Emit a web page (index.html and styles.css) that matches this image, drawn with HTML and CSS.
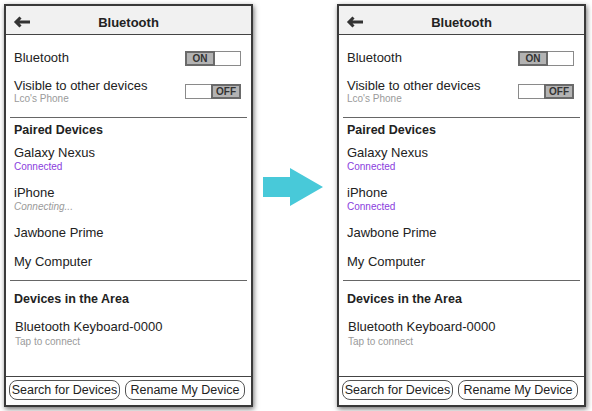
FILE: index.html
```html
<!DOCTYPE html>
<html lang="en">
<head>
  <meta charset="UTF-8">
  <title>Bluetooth Settings</title>
  <link rel="stylesheet" href="styles.css">
</head>
<body>

  <div class="stage">

    <!-- before -->
    <div class="phone">
      <div class="header">
        <svg class="back" width="18" height="12" viewBox="0 0 18 12">
          <path d="M17 6H3M7.5 1.5L3 6l4.5 4.5" fill="none" stroke="#333" stroke-width="3"/>
        </svg>
        <span class="title">Bluetooth</span>
      </div>

      <div class="content">
        <div class="setting first">
          <div class="label">Bluetooth</div>
          <div class="toggle on"><span class="knob">ON</span><span class="blank"></span></div>
        </div>
        <div class="setting second">
          <div>
            <div class="label">Visible to other devices</div>
            <div class="sub">Lco's Phone</div>
          </div>
          <div class="toggle off"><span class="blank"></span><span class="knob">OFF</span></div>
        </div>

        <hr class="divider top">

        <div class="section">Paired Devices</div>
        <div class="device first">
          <div class="name">Galaxy Nexus</div>
          <div class="status connected">Connected</div>
        </div>
        <div class="device second">
          <div class="name">iPhone</div>
          <div class="status connecting">Connecting...</div>
        </div>
        <div class="device third">
          <div class="name">Jawbone Prime</div>
        </div>
        <div class="device last">
          <div class="name">My Computer</div>
        </div>

        <hr class="divider">

        <div class="section area">Devices in the Area</div>
        <div class="device nearby">
          <div class="name">Bluetooth Keyboard-0000</div>
          <div class="status">Tap to connect</div>
        </div>
      </div>

      <div class="footer">
        <button class="btn search">Search for Devices</button>
        <button class="btn rename">Rename My Device</button>
      </div>
    </div>

    <div class="arrow">
      <svg width="60" height="38" viewBox="0 0 60 38">
        <polygon points="0,9 27,9 27,0 60,19 27,38 27,29 0,29" fill="#48c9d9"/>
      </svg>
    </div>

    <!-- after -->
    <div class="phone">
      <div class="header">
        <svg class="back" width="18" height="12" viewBox="0 0 18 12">
          <path d="M17 6H3M7.5 1.5L3 6l4.5 4.5" fill="none" stroke="#333" stroke-width="3"/>
        </svg>
        <span class="title">Bluetooth</span>
      </div>

      <div class="content">
        <div class="setting first">
          <div class="label">Bluetooth</div>
          <div class="toggle on"><span class="knob">ON</span><span class="blank"></span></div>
        </div>
        <div class="setting second">
          <div>
            <div class="label">Visible to other devices</div>
            <div class="sub">Lco's Phone</div>
          </div>
          <div class="toggle off"><span class="blank"></span><span class="knob">OFF</span></div>
        </div>

        <hr class="divider top">

        <div class="section">Paired Devices</div>
        <div class="device first">
          <div class="name">Galaxy Nexus</div>
          <div class="status connected">Connected</div>
        </div>
        <div class="device second">
          <div class="name">iPhone</div>
          <div class="status connected">Connected</div>
        </div>
        <div class="device third">
          <div class="name">Jawbone Prime</div>
        </div>
        <div class="device last">
          <div class="name">My Computer</div>
        </div>

        <hr class="divider">

        <div class="section area">Devices in the Area</div>
        <div class="device nearby">
          <div class="name">Bluetooth Keyboard-0000</div>
          <div class="status">Tap to connect</div>
        </div>
      </div>

      <div class="footer">
        <button class="btn search">Search for Devices</button>
        <button class="btn rename">Rename My Device</button>
      </div>
    </div>

  </div>

</body>
</html>
```

FILE: styles.css
```css
body {
  margin: 0;
  padding: 4px;
  background: white;
  font-family: "Liberation Sans", Arial, sans-serif;
  color: #222;
}

.stage {
  display: flex;
}

.phone {
  width: 249px;
  height: 403px;
  box-sizing: border-box;
  border: 2px solid #3a3a3a;
  background: white;
  box-shadow: 1px 2px 5px rgba(0,0,0,0.55);
  display: flex;
  flex-direction: column;
}

.header {
  height: 29px;
  padding-top: 5px;
  box-sizing: border-box;
  background: #f1f1f1;
  border-bottom: 1px solid #444;
  display: flex;
  align-items: center;
  justify-content: center;
  position: relative;
}

.back {
  position: absolute;
  left: 7px;
  top: 10px;
}

.title {
  font-weight: bold;
  font-size: 13px;
}

.content {
  flex: 1;
  padding: 0 10px 0 8px;
}

.setting {
  display: flex;
  justify-content: space-between;
  align-items: center;
}

.setting.first {
  margin-top: 15px;
  height: 16px;
}

.setting.second {
  margin-top: 12px;
}

.label {
  font-size: 13px;
  line-height: 15px;
}

.setting.first .label {
  line-height: 16px;
}

.sub {
  font-size: 10px;
  line-height: 12px;
  color: #9a9a9a;
}

.toggle {
  display: flex;
  width: 56px;
  height: 15px;
}

.knob {
  width: 30px;
  box-sizing: border-box;
  background: #b3b3b3;
  border: 2px solid #6a6a6a;
  font-size: 10px;
  font-weight: bold;
  color: #333;
  text-align: center;
  line-height: 11px;
}

.blank {
  flex: 1;
  box-sizing: border-box;
  border: 1px solid #8a8a8a;
  background: white;
}

.on .blank {
  border-left: none;
}

.off .blank {
  border-right: none;
}

.divider {
  border: none;
  border-top: 1px solid #666;
  margin: 11px -6px 0 -4px;
}

.divider.top {
  margin-top: 12px;
}

.section {
  font-size: 12.5px;
  font-weight: bold;
  line-height: 16px;
  margin-top: 4px;
}

.section.area {
  margin-top: 10px;
}

.device {
  margin-top: 13px;
}

.device.first {
  margin-top: 7px;
}

.device.second {
  margin-top: 12px;
}

.device.third {
  margin-top: 12px;
}

.device.last {
  margin-top: 14px;
}

.device.nearby {
  margin-top: 12px;
  padding-left: 1px;
}

.device.nearby .status {
  margin-top: 1px;
}

.name {
  font-size: 13px;
  line-height: 15px;
}

.status {
  font-size: 10px;
  line-height: 13px;
  color: #9a9a9a;
}

.status.connected {
  color: #8a3ddd;
}

.status.connecting {
  font-style: italic;
}

.footer {
  border-top: 1px solid #444;
  height: 29px;
  box-sizing: border-box;
  padding: 3px 0 0 3px;
  display: flex;
  gap: 5px;
}

.btn {
  height: 20px;
  background: white;
  border: 1px solid #555;
  border-radius: 8px;
  font-family: "Liberation Sans", Arial, sans-serif;
  font-size: 12.5px;
  color: #222;
  padding: 0;
}

.btn.search {
  width: 111px;
}

.btn.rename {
  width: 120px;
}

.arrow {
  width: 84px;
  display: flex;
  justify-content: center;
  align-items: flex-start;
  padding-top: 164px;
  padding-right: 5px;
  box-sizing: border-box;
}
```
